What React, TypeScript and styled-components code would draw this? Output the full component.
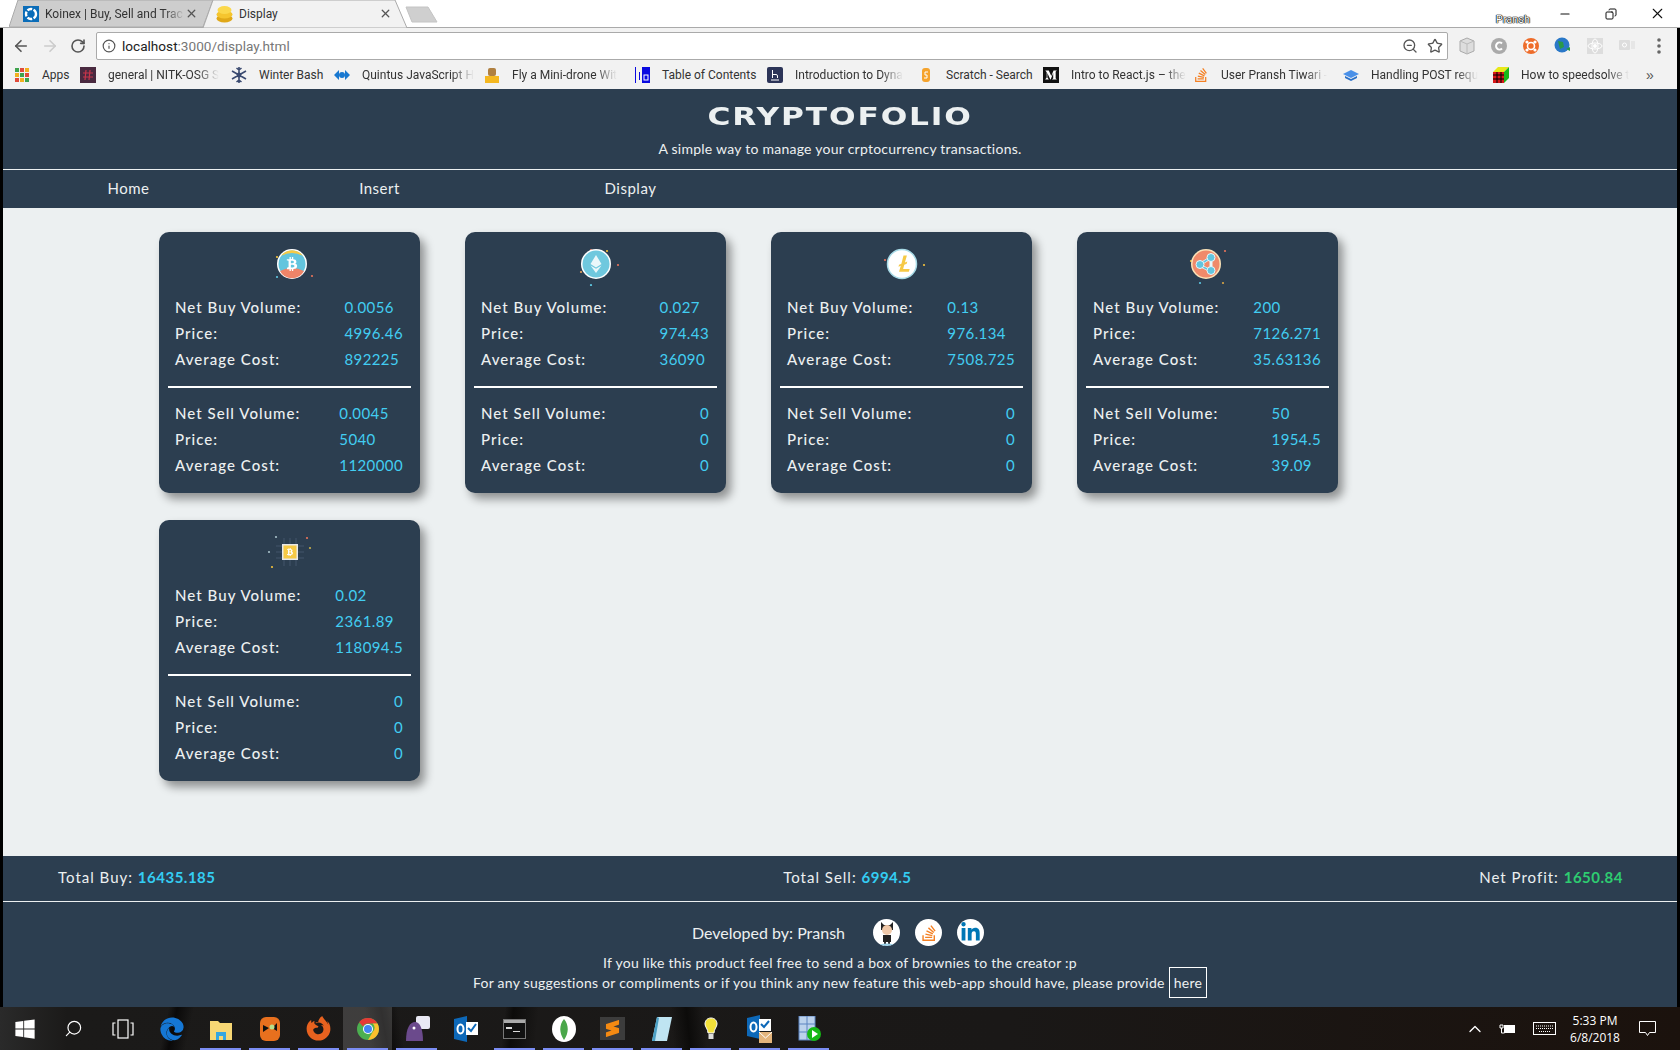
import styled, { createGlobalStyle } from 'styled-components';
import { ReactNode } from 'react';
import { ArrowLeft, ArrowRight, RotateCw, Info, ZoomOut, Star, Search, ChevronUp, X, Minus, Copy } from 'lucide-react';
import { FaBtc, FaStackOverflow, FaLinkedinIn, FaWindows, FaEdge, FaFirefoxBrowser, FaMediumM } from 'react-icons/fa';
import { SiSublimetext } from 'react-icons/si';

const GlobalStyle = createGlobalStyle`
  html, body {
    margin: 0;
    padding: 0;
    height: 100%;
    overflow: hidden;
    background: #000;
  }
  * {
    box-sizing: border-box;
  }
`;

const Screen = styled.div`
  width: 1680px;
  height: 1050px;
  display: flex;
  flex-direction: column;
  font-family: 'Liberation Sans', Arial, sans-serif;
`;

/* ---------- browser chrome ---------- */

const TabStrip = styled.div`
  height: 28px;
  flex: 0 0 auto;
  display: flex;
  padding-left: 9px;
  background: #fff;
  border-bottom: 1px solid #aaa;
`;

const Tab = styled.div<{ $active?: boolean }>`
  position: relative;
  width: 204px;
  height: 27px;
  display: flex;
  align-items: center;
  padding: 0 15px 0 ${p => (p.$active ? '13px' : '14px')};
  margin-left: ${p => (p.$active ? '-10px' : '0')};
  font-family: Roboto, sans-serif;
  font-size: 12px;
  color: #333;
  z-index: ${p => (p.$active ? 2 : 1)};
`;

const TabShape = styled.svg`
  position: absolute;
  left: 0;
  top: 0;
  z-index: -1;
`;

const TabLabel = styled.span<{ $fade?: boolean }>`
  flex: 1;
  margin-left: 6px;
  white-space: nowrap;
  ${p => p.$fade && 'mask-image: linear-gradient(to right, #000 85%, transparent);'}
`;

const NewTab = styled.svg`
  margin: 6px 0 0 -2px;
`;

const WindowControls = styled.div`
  margin-left: auto;
  display: flex;
  align-items: flex-start;
  color: #111;
`;

const UserBadge = styled.span`
  font-family: Roboto, sans-serif;
  font-size: 11px;
  line-height: 14px;
  margin: 13px 12px 0 0;
  color: #fff;
  text-shadow: 0 0 1px #000, 0 0 1px #000, 0 0 1px #000, 0 0 1px #000;
`;

const WindowButton = styled.span`
  width: 46px;
  height: 27px;
  display: flex;
  align-items: center;
  justify-content: center;
`;

const Toolbar = styled.div`
  height: 32px;
  flex: 0 0 auto;
  display: flex;
  align-items: flex-start;
  background: #f2f2f2;
  border-left: 3px solid #000;
  border-right: 3px solid #000;
  padding-top: 4px;
`;

const NavButtons = styled.div`
  width: 93px;
  height: 28px;
  display: flex;
  align-items: center;
  padding-left: 9px;
  gap: 11px;
`;

const AddressBar = styled.div`
  width: 1352px;
  height: 28px;
  display: flex;
  align-items: center;
  padding: 0 4px 0 5px;
  background: #fff;
  border: 1px solid #aaa;
  border-radius: 2px;
  font-family: Roboto, sans-serif;
  font-size: 13.6px;
  color: #777;
`;

const Host = styled.span`
  color: #222;
  margin-left: 6px;
`;

const AddressTools = styled.div`
  margin-left: auto;
  display: flex;
  align-items: center;
  gap: 9px;
  color: #555;
`;

const Extensions = styled.div`
  display: flex;
  align-items: center;
  height: 28px;
  margin-left: 10px;
  gap: 14px;
`;

const Bookmarks = styled.div`
  height: 29px;
  flex: 0 0 auto;
  display: flex;
  align-items: center;
  background: #f2f2f2;
  border-left: 3px solid #000;
  border-right: 3px solid #000;
  padding-left: 11px;
`;

const Bookmark = styled.div<{ $width: number }>`
  width: ${p => p.$width}px;
  flex: 0 0 auto;
  display: flex;
  align-items: center;
  gap: 12px;
  font-family: Roboto, sans-serif;
  font-size: 12px;
  color: #333;
  white-space: nowrap;
`;

const BookmarkLabel = styled.span<{ $fade?: boolean }>`
  ${p => p.$fade && 'mask-image: linear-gradient(to right, #000 80%, transparent);'}
`;

const More = styled.span`
  font-size: 14px;
  color: #555;
  margin-left: 5px;
`;

/* ---------- page ---------- */

const Page = styled.div`
  flex: 1;
  min-height: 0;
  display: flex;
  flex-direction: column;
  border-left: 3px solid #000;
  border-right: 3px solid #000;
  background: #ecf0f1;
  font-family: Lato, sans-serif;
`;

const Header = styled.header`
  height: 81px;
  flex: 0 0 auto;
  display: flex;
  flex-direction: column;
  align-items: center;
  background: #2c3e50;
  border-bottom: 1px solid #ecf0f1;
  color: #ecf0f1;
`;

const Title = styled.h1`
  margin: 13px 0 0;
  font-family: 'DejaVu Sans', sans-serif;
  font-size: 25px;
  line-height: 30px;
  font-weight: 700;
  letter-spacing: 1.5px;
  transform: scaleX(1.25);
`;

const Tagline = styled.p`
  margin: 8px 0 0;
  font-size: 14px;
  line-height: 17px;
  letter-spacing: 0.25px;
`;

const Nav = styled.nav`
  height: 38px;
  flex: 0 0 auto;
  display: flex;
  background: #2c3e50;
`;

const NavLink = styled.a`
  width: 251px;
  text-align: center;
  font-size: 15px;
  line-height: 36px;
  letter-spacing: 0.5px;
  color: #ecf0f1;
`;

const Main = styled.main`
  flex: 1;
  min-height: 0;
  display: flex;
  flex-wrap: wrap;
  align-content: flex-start;
  gap: 27px 45px;
  padding: 24px 250px 0 156px;
`;

const Card = styled.section`
  width: 261px;
  height: 261px;
  padding: 10px 9px 0;
  background: #2c3e50;
  border-radius: 10px;
  box-shadow: 5px 6px 10px rgba(0, 0, 0, 0.4);
`;

const CoinSlot = styled.div`
  height: 44px;
  margin-bottom: 8px;
  display: flex;
  justify-content: center;
`;

const Figures = styled.table`
  width: 100%;
  border-collapse: collapse;
  font-size: 15px;
`;

const Label = styled.td`
  height: 26px;
  padding: 0 7px;
  color: #ecf0f1;
  font-weight: 500;
  letter-spacing: 1.05px;
  white-space: nowrap;
`;

const Value = styled.td`
  width: 1%;
  height: 26px;
  padding: 0 8px 0 0;
  color: #42cdf2;
  letter-spacing: 0.4px;
  white-space: nowrap;
`;

const Divider = styled.hr`
  margin: 14px 0 12px;
  height: 2px;
  border: none;
  background: #fff;
`;

const Totals = styled.div`
  height: 46px;
  flex: 0 0 auto;
  display: flex;
  align-items: center;
  justify-content: space-between;
  padding: 0 54px 3px 55px;
  background: #2c3e50;
  border-bottom: 1px solid #ecf0f1;
  color: #ecf0f1;
  font-size: 15px;
  letter-spacing: 1px;
`;

const Amount = styled.strong<{ $profit?: boolean }>`
  letter-spacing: 0.5px;
  color: ${p => (p.$profit ? '#2ecc71' : '#34cdf3')};
`;

const Footer = styled.footer`
  flex: 0 0 105px;
  display: flex;
  flex-direction: column;
  align-items: center;
  padding-top: 17px;
  background: #2c3e50;
  color: #ecf0f1;
  font-size: 14px;
  line-height: 20px;
`;

const Credits = styled.div`
  height: 27px;
  display: flex;
  align-items: center;
  margin-bottom: 7px;
  padding-right: 4px;
  font-size: 16px;
`;

const Socials = styled.div`
  display: flex;
  gap: 15px;
  margin-left: 28px;
`;

const Social = styled.span<{ $color?: string }>`
  width: 27px;
  height: 27px;
  display: flex;
  align-items: center;
  justify-content: center;
  border-radius: 50%;
  background: #fff;
  color: ${p => p.$color || '#000'};
  font-size: 18px;
  overflow: hidden;
`;

const FooterLine = styled.div`
  letter-spacing: 0.25px;
`;

const HereLink = styled.a`
  margin-left: 4px;
  padding: 6px 4px;
  border: 1px solid #fff;
`;

/* ---------- taskbar ---------- */

const Taskbar = styled.div`
  height: 43px;
  flex: 0 0 auto;
  display: flex;
  align-items: stretch;
  color: #fff;
  font-family: 'Open Sans', sans-serif;
  background:
    linear-gradient(102deg, transparent 10%, #0a0909 10.5%, transparent 11.5%),
    linear-gradient(80deg, transparent 22%, #0a0909 23%, transparent 24%),
    linear-gradient(96deg, transparent 30%, #0c0b0a 30.5%, transparent 32%),
    linear-gradient(84deg, transparent 40%, #0c0b0a 41%, transparent 42%),
    linear-gradient(90deg, #2a2a2a 0, #1b1a19 4%, #1a1817 60%, #1b120d 100%);
`;

const TaskSlot = styled.div<{ $running?: boolean; $focus?: boolean }>`
  position: relative;
  width: 49px;
  display: flex;
  align-items: center;
  justify-content: center;
  font-size: 22px;
  background: ${p => (p.$focus ? 'rgba(255, 255, 255, 0.16)' : 'transparent')};
  ${p =>
    p.$running &&
    `&::after {
      content: '';
      position: absolute;
      left: 4px;
      right: 4px;
      bottom: 0;
      height: 2px;
      background: #7b8df3;
    }`}
`;

const Tray = styled.div`
  margin-left: auto;
  display: flex;
  align-items: center;
  padding-right: 15px;
`;

const TrayIcon = styled.span<{ $width: number }>`
  width: ${p => p.$width}px;
  display: flex;
  justify-content: center;
`;

const Clock = styled.div`
  width: 62px;
  margin: 0 3px;
  text-align: center;
  font-size: 12px;
  line-height: 17px;
`;

/* ---------- drawings ---------- */

const Spark = ({ dots }: { dots: [number, number, string][] }) => (
  <>
    {dots.map(([x, y, fill], i) => (
      <circle key={i} cx={x} cy={y} r={1.1} fill={fill} />
    ))}
  </>
);

const BitcoinCoin = () => (
  <svg width="60" height="44" viewBox="0 0 60 44">
    <Spark dots={[[17, 15, '#f5c33b'], [17, 35, '#5ec6e0'], [52, 34, '#e8745a']]} />
    <circle cx="32" cy="22" r="15" fill="#fff" />
    <circle cx="32" cy="22" r="13.5" fill="#63c5de" />
    <path d="M21 14a13.5 13.5 0 0 1 22 0q-11-6-22 0z" fill="#f6c945" />
    <path d="M20 29a13.5 13.5 0 0 0 24 0q-12-6-24 0z" fill="#ee8468" />
    <FaBtc x="25" y="15" size={14} color="#fff" />
  </svg>
);

const EtherCoin = () => (
  <svg width="60" height="44" viewBox="0 0 60 44">
    <Spark dots={[[41, 9, '#f5c33b'], [52, 23, '#e8745a'], [15, 30, '#e8a05a'], [25, 43, '#5ec6e0'], [25, 8, '#e8745a']]} />
    <circle cx="30" cy="22" r="15" fill="#fff" />
    <circle cx="30" cy="22" r="13.5" fill="#6fc8de" />
    <path d="M30 13l-5.5 9L30 25.5l5.5-3.500zM24.500 23.500L30 31l5.500-7.500-5.500 3.200z" fill="#eaf7fa" />
  </svg>
);

const LiteCoin = () => (
  <svg width="60" height="44" viewBox="0 0 60 44">
    <Spark dots={[[13, 18, '#e8745a'], [16, 24, '#5ec6e0'], [52, 23, '#f5c33b']]} />
    <circle cx="30" cy="22" r="14.5" fill="#fff" stroke="#a8dbe8" strokeWidth="1.5" />
    <path d="M31.5 13.5h3.4l-2 7 2.4-1-.6 2.2-2.4 1-1.2 4.3h6.6l-.9 2.8H27l1.8-6-2.3.9.5-2 2.4-1z" fill="#f6c945" />
  </svg>
);

const RippleCoin = () => (
  <svg width="60" height="44" viewBox="0 0 60 44">
    <Spark dots={[[13, 19, '#f5c33b'], [47, 9, '#e8745a'], [22, 41, '#5ec6e0'], [45, 41, '#d9a545']]} />
    <circle cx="28" cy="22" r="15" fill="#fbe3b8" />
    <circle cx="28" cy="22" r="13.5" fill="#f08a6a" />
    <path d="M21 23l12-7.500M21 23l12 6M33 15.500v13" stroke="#eaf7fa" strokeWidth="3" />
    <path d="M21 23l12-7.500M21 23l12 6" stroke="#63c5de" strokeWidth="1.500" />
    <circle cx="22" cy="22.500" r="4" fill="#63c5de" stroke="#eaf7fa" />
    <circle cx="33" cy="15.500" r="4" fill="#63c5de" stroke="#eaf7fa" />
    <circle cx="33" cy="28.500" r="4" fill="#63c5de" stroke="#eaf7fa" />
  </svg>
);

const CashCoin = () => (
  <svg width="60" height="44" viewBox="0 0 60 44">
    <Spark dots={[[12, 37, '#f5c33b'], [9, 22, '#a8c0c8'], [47, 8, '#e8745a'], [50, 18, '#c9b04a'], [16, 7, '#a8c0c8']]} />
    <path
      d="M24 8v6M30 8v6M36 8v6M24 30v6M30 30v6M36 30v6M16 16h6M16 22h6M16 28h6M38 16h6M38 22h6M38 28h6"
      stroke="#42556a"
    />
    <rect x="22" y="14" width="16" height="16" fill="#e8e8e8" />
    <rect x="23.500" y="15.500" width="13" height="13" fill="#f6c945" />
    <FaBtc x="26" y="18" size={8} color="#fff" />
  </svg>
);

const KoinexIcon = () => (
  <svg width="16" height="16" viewBox="0 0 16 16">
    <rect width="16" height="16" fill="#0a6cb8" />
    <circle cx="8" cy="8" r="5" fill="none" stroke="#fff" strokeWidth="2.4" strokeDasharray="5 1.4" />
  </svg>
);

const CoinsIcon = () => (
  <svg width="17" height="18" viewBox="0 0 17 18">
    <ellipse cx="8.5" cy="13.5" rx="8" ry="4" fill="#e0a818" />
    <ellipse cx="8.5" cy="9.5" rx="8" ry="4" fill="#f5c52e" />
    <ellipse cx="8.5" cy="5" rx="7" ry="4" fill="#fbd84c" />
  </svg>
);

const ExtIcon = ({ children }: { children: ReactNode }) => (
  <svg width="18" height="18" viewBox="0 0 18 18">
    {children}
  </svg>
);

const FavBox = styled.svg`
  flex: 0 0 auto;
`;

const Fav = ({ children }: { children: ReactNode }) => (
  <FavBox width="16" height="16" viewBox="0 0 16 16">
    {children}
  </FavBox>
);

const ChromeIcon = () => (
  <svg width="24" height="24" viewBox="0 0 24 24">
    <circle cx="12" cy="12" r="11" fill="#4caf50" />
    <path d="M12 1a11 11 0 0 1 9.5 5.5H12a5.5 5.5 0 0 0-5 3L3.2 5.2A11 11 0 0 1 12 1z" fill="#e53935" />
    <path d="M21.5 6.5A11 11 0 0 1 12 23l4.8-8.2a5.5 5.5 0 0 0-.2-8.3z" fill="#fbc02d" />
    <circle cx="12" cy="12" r="5" fill="#fff" />
    <circle cx="12" cy="12" r="4" fill="#4285f4" />
  </svg>
);

const SublimeTile = styled.span`
  display: flex;
  padding: 3px 4px;
  background: #3c3c3c;
`;

const taskIcons: { icon: ReactNode; running?: boolean; focus?: boolean }[] = [
  { icon: <FaWindows color="#fff" /> },
  { icon: <Search size={19} color="#fff" strokeWidth={1.5} transform="scale(-1 1)" /> },
  {
    icon: (
      <svg width="22" height="20" viewBox="0 0 22 20" fill="none" stroke="#fff" strokeWidth="1.2">
        <rect x="6" y="1" width="10" height="18" />
        <path d="M3.5 4H1v12h2.5M18.5 4H21v12h-2.5" />
      </svg>
    ),
  },
  { icon: <FaEdge color="#1577d4" size={24} /> },
  {
    icon: (
      <svg width="24" height="24" viewBox="0 0 24 24">
        <path d="M1 4h8l2 2h12v17H1z" fill="#f7d774" />
        <path d="M7 23v-8h10v8h-3v-4h-4v4z" fill="#35a6e0" />
      </svg>
    ),
    running: true,
  },
  {
    icon: (
      <svg width="22" height="26" viewBox="0 0 22 26">
        <rect x="1" y="1" width="20" height="24" rx="6" fill="#e8701e" />
        <path d="M4 9l6 3-6 4zM18 7l-5 5 5 3z" fill="#111" />
        <circle cx="13" cy="11" r="2.5" fill="#b9e08a" />
      </svg>
    ),
    running: true,
  },
  { icon: <FaFirefoxBrowser color="#e8621f" size={25} />, running: true },
  { icon: <ChromeIcon />, running: true, focus: true },
  {
    icon: (
      <svg width="26" height="26" viewBox="0 0 26 26">
        <rect x="12" y="0" width="14" height="13" rx="2" fill="#e9e9f4" />
        <path d="M2 25C2 12 6 6 11 6s8 7 8 19z" fill="#6b4a8c" />
        <circle cx="10" cy="12" r="1.5" fill="#fff" />
      </svg>
    ),
    running: true,
  },
  {
    icon: (
      <svg width="24" height="26" viewBox="0 0 24 26">
        <path d="M0 3l13-3v26L0 23z" fill="#0d68b8" />
        <rect x="12" y="6" width="12" height="13" fill="#fff" />
        <path d="M14 12l3 3 5-7" fill="none" stroke="#0d68b8" strokeWidth="2" />
        <ellipse cx="6.5" cy="13" rx="3" ry="4.5" fill="none" stroke="#fff" strokeWidth="2" />
      </svg>
    ),
  },
  {
    icon: (
      <svg width="23" height="20" viewBox="0 0 23 20">
        <rect x=".5" y=".5" width="22" height="19" fill="#111" stroke="#777" />
        <rect x="1" y="1" width="21" height="3" fill="#aaa" />
        <path d="M3 8h6v2H3zM10 12h7v1h-7z" fill="#ddd" />
      </svg>
    ),
    running: true,
  },
  {
    icon: (
      <svg width="24" height="26" viewBox="0 0 24 26">
        <ellipse cx="12" cy="13" rx="12" ry="13" fill="#fff" />
        <path d="M12 3c-5 6-5 14 0 21 5-7 5-15 0-21z" fill="#4aa74a" />
      </svg>
    ),
    running: true,
  },
  {
    icon: (
      <SublimeTile>
        <SiSublimetext color="#f58a12" size={17} />
      </SublimeTile>
    ),
    running: true,
  },
  {
    icon: (
      <svg width="22" height="26" viewBox="0 0 22 26">
        <path d="M6 1h15l-5 24H1z" fill="#bfe4f2" />
        <path d="M1 25l5-24 2 1-4 23z" fill="#4a9fc4" />
      </svg>
    ),
    running: true,
  },
  {
    icon: (
      <svg width="14" height="24" viewBox="0 0 14 24">
        <path d="M7 1c4 0 6 3 6 6 0 3-3 5-3 9H4c0-4-3-6-3-9 0-3 2-6 6-6z" fill="#f4e23a" stroke="#fff" />
        <rect x="4.5" y="17" width="5" height="5" fill="#ddd" />
      </svg>
    ),
    running: true,
  },
  {
    icon: (
      <svg width="25" height="28" viewBox="0 0 25 28">
        <path d="M0 3l13-3v24L0 21z" fill="#0d68b8" />
        <rect x="12" y="4" width="12" height="12" fill="#fff" />
        <path d="M14 9l3 3 5-6" fill="none" stroke="#0d68b8" strokeWidth="2" />
        <rect x="12" y="17" width="13" height="11" fill="#e3b47c" />
        <path d="M12 17l6.5 6 6.5-6" fill="none" stroke="#fff" />
        <ellipse cx="6.5" cy="12" rx="3" ry="4.5" fill="none" stroke="#fff" strokeWidth="2" />
      </svg>
    ),
    running: true,
  },
  {
    icon: (
      <svg width="24" height="26" viewBox="0 0 24 26">
        <rect x="2" y="0" width="16" height="24" fill="#bcd2ec" stroke="#5c84c0" />
        <path d="M2 8h16M2 16h16M10 0v24" stroke="#5c84c0" />
        <circle cx="17" cy="18" r="7" fill="#15b815" />
        <path d="M15 14l6 4-6 4z" fill="#fff" />
      </svg>
    ),
    running: true,
  },
];

const bookmarks: { icon: ReactNode; label: string; width: number; fade?: boolean }[] = [
  {
    icon: (
      <Fav>
        {[1, 6, 11].map(x =>
          [1, 6, 11].map((y, i) => (
            <rect key={`${x}-${y}`} x={x} y={y} width="4" height="4" fill={['#e04b3a', '#3fa34d', '#f2b01e'][(x + i) % 3]} />
          ))
        )}
      </Fav>
    ),
    label: 'Apps',
    width: 66,
  },
  {
    icon: (
      <Fav>
        <rect width="16" height="16" fill="#4a2a40" />
        <path d="M6 3l-1 10M10 3L9 13M3 6h10M3 10h10" stroke="#c8354a" strokeWidth="1.2" />
      </Fav>
    ),
    label: 'general | NITK-OSG S',
    width: 151,
    fade: true,
  },
  {
    icon: (
      <Fav>
        <path d="M8 0v16M1 4l14 8M15 4L1 12M8 3L5.5 1M8 3l2.500-2M8 13l-2.500 2M8 13l2.500 2" stroke="#3a4a70" strokeWidth="1.600" fill="none" />
        <circle cx="8" cy="8" r="2.500" fill="#3a4a70" />
      </Fav>
    ),
    label: 'Winter Bash',
    width: 103,
  },
  {
    icon: (
      <Fav>
        <path d="M5 3L0 8l5 5zM11 3l5 5-5 5z" fill="#1878d0" />
        <circle cx="8" cy="8" r="3" fill="#1878d0" />
      </Fav>
    ),
    label: 'Quintus JavaScript H',
    width: 150,
    fade: true,
  },
  {
    icon: (
      <Fav>
        <rect x="1" y="9" width="14" height="7" fill="#f5b820" />
        <rect x="4" y="1" width="8" height="8" rx="2" fill="#b08040" />
      </Fav>
    ),
    label: 'Fly a Mini-drone Wit',
    width: 150,
    fade: true,
  },
  {
    icon: (
      <Fav>
        <rect x="8" width="8" height="16" fill="#0a0ae0" />
        <rect x="1" width="1" height="16" fill="#0a0ae0" />
        <rect x="5" y="5" width="1" height="8" fill="#0a0ae0" />
        <rect x="10" y="8" width="4" height="5" fill="none" stroke="#fff" />
      </Fav>
    ),
    label: 'Table of Contents',
    width: 133,
  },
  {
    icon: (
      <Fav>
        <rect width="16" height="16" rx="2" fill="#2c3458" />
        <path d="M5.5 3v8M5.5 7.5H9A1.5 1.5 0 0 1 10.5 9v2M4 13h8" stroke="#fff" fill="none" />
      </Fav>
    ),
    label: 'Introduction to Dyna',
    width: 151,
    fade: true,
  },
  {
    icon: (
      <Fav>
        <rect x="4" y="1" width="8" height="14" rx="3" fill="#f5a32c" />
        <path d="M10 5H7v3h2v3H6" stroke="#fff" fill="none" />
      </Fav>
    ),
    label: 'Scratch - Search',
    width: 125,
  },
  {
    icon: (
      <Fav>
        <rect width="16" height="16" fill="#111" />
        <FaMediumM x="2" y="2" size={12} color="#fff" />
      </Fav>
    ),
    label: 'Intro to React.js – the',
    width: 150,
    fade: true,
  },
  {
    icon: (
      <Fav>
        <FaStackOverflow size={16} color="#f48024" />
      </Fav>
    ),
    label: 'User Pransh Tiwari -',
    width: 150,
    fade: true,
  },
  {
    icon: (
      <Fav>
        <path d="M0 7l8-4 8 4-8 4z" fill="#4a90e8" />
        <path d="M2 9l6 3 6-3v2l-6 3-6-3z" fill="#2a70c8" />
      </Fav>
    ),
    label: 'Handling POST requ',
    width: 150,
    fade: true,
  },
  {
    icon: (
      <Fav>
        <path d="M0 5h11v11H0z" fill="#d81818" />
        <path d="M0 5l5-5h11L11 5z" fill="#e8e818" />
        <path d="M11 5l5-5v11l-5 5z" fill="#18b818" />
        <path d="M0 8h11M0 12h11M4 5v11M8 5v11" stroke="#000" />
      </Fav>
    ),
    label: 'How to speedsolve t',
    width: 148,
    fade: true,
  },
];

type Row = [string, string];

const coins: { coin: ReactNode; buy: string[]; sell: string[] }[] = [
  { coin: <BitcoinCoin />, buy: ['0.0056', '4996.46', '892225'], sell: ['0.0045', '5040', '1120000'] },
  { coin: <EtherCoin />, buy: ['0.027', '974.43', '36090'], sell: ['0', '0', '0'] },
  { coin: <LiteCoin />, buy: ['0.13', '976.134', '7508.725'], sell: ['0', '0', '0'] },
  { coin: <RippleCoin />, buy: ['200', '7126.271', '35.63136'], sell: ['50', '1954.5', '39.09'] },
  { coin: <CashCoin />, buy: ['0.02', '2361.89', '118094.5'], sell: ['0', '0', '0'] },
];

const FigureTable = ({ title, values }: { title: string; values: string[] }) => {
  const rows: Row[] = [
    [title, values[0]],
    ['Price:', values[1]],
    ['Average Cost:', values[2]],
  ];
  return (
    <Figures>
      <tbody>
        {rows.map(([label, value]) => (
          <tr key={label}>
            <Label>{label}</Label>
            <Value>{value}</Value>
          </tr>
        ))}
      </tbody>
    </Figures>
  );
};

const App = () => (
  <Screen>
    <GlobalStyle />
    <TabStrip>
      <Tab>
        <TabShape width="204" height="27" viewBox="0 0 204 27">
          <path d="M0 27L9 0h195l-10 27z" fill="#cdcdcd" stroke="#aaa" />
        </TabShape>
        <KoinexIcon />
        <TabLabel $fade>Koinex | Buy, Sell and Trac</TabLabel>
        <X size={13} color="#555" strokeWidth={2.4} />
      </Tab>
      <Tab $active>
        <TabShape width="204" height="28" viewBox="0 0 204 28">
          <path d="M0 28L10 0h182l12 28z" fill="#f2f2f2" stroke="#aaa" />
        </TabShape>
        <CoinsIcon />
        <TabLabel>Display</TabLabel>
        <X size={13} color="#555" strokeWidth={2.4} />
      </Tab>
      <NewTab width="34" height="18" viewBox="0 0 34 18">
        <path d="M1 1h22l9 15H7z" fill="#cfcfcf" stroke="#c4c4c4" />
      </NewTab>
      <WindowControls>
        <UserBadge>Pransh</UserBadge>
        <WindowButton>
          <Minus size={14} strokeWidth={1.8} />
        </WindowButton>
        <WindowButton>
          <Copy size={12} strokeWidth={2} transform="scale(-1 1)" />
        </WindowButton>
        <WindowButton>
          <X size={17} strokeWidth={1.5} />
        </WindowButton>
      </WindowControls>
    </TabStrip>
    <Toolbar>
      <NavButtons>
        <ArrowLeft size={18} color="#555" strokeWidth={2.2} />
        <ArrowRight size={18} color="#ccc" strokeWidth={2.2} />
        <RotateCw size={16} color="#555" strokeWidth={2.4} />
      </NavButtons>
      <AddressBar>
        <Info size={14} color="#555" />
        <Host>localhost</Host>:3000/display.html
        <AddressTools>
          <ZoomOut size={16} />
          <Star size={16} />
        </AddressTools>
      </AddressBar>
      <Extensions>
        <ExtIcon>
          <path d="M9 1l7 3v10l-7 3-7-3V4z" fill="#ddd" stroke="#aaa" />
          <path d="M9 7v10M2 4l7 3 7-3" stroke="#bbb" fill="none" />
        </ExtIcon>
        <ExtIcon>
          <circle cx="9" cy="9" r="8" fill="#aaa" />
          <path d="M12 6.5a3.5 3.5 0 1 0 0 5" stroke="#fff" strokeWidth="2" fill="none" />
        </ExtIcon>
        <ExtIcon>
          <circle cx="9" cy="9" r="8" fill="#ee6c2a" />
          <circle cx="9" cy="9" r="3.5" fill="none" stroke="#fff" strokeWidth="1.6" />
          <circle cx="5" cy="5" r="1.6" fill="#fff" />
          <circle cx="13" cy="5" r="1.6" fill="#fff" />
          <circle cx="5" cy="13" r="1.6" fill="#fff" />
          <circle cx="13" cy="13" r="1.6" fill="#fff" />
        </ExtIcon>
        <ExtIcon>
          <circle cx="8" cy="8" r="7.5" fill="#2a78c8" />
          <path d="M4 4l5 1 1 5-4 2zM12 12l4-2v4z" fill="#2a9a48" />
        </ExtIcon>
        <ExtIcon>
          <rect x="1" y="1" width="16" height="16" fill="#ddd" />
          <circle cx="9" cy="9" r="2" fill="#fff" />
          <ellipse cx="9" cy="9" rx="7" ry="3" fill="none" stroke="#fff" />
          <ellipse cx="9" cy="9" rx="3" ry="7" fill="none" stroke="#fff" />
        </ExtIcon>
        <ExtIcon>
          <rect x="1" y="3" width="11" height="10" rx="1" fill="#ddd" />
          <path d="M13 4h4v8h-4z" fill="#e6e6e6" />
          <circle cx="6.5" cy="8" r="2" fill="none" stroke="#fff" />
        </ExtIcon>
        <ExtIcon>
          <circle cx="9" cy="3" r="1.8" fill="#666" />
          <circle cx="9" cy="9" r="1.8" fill="#666" />
          <circle cx="9" cy="15" r="1.8" fill="#666" />
        </ExtIcon>
      </Extensions>
    </Toolbar>
    <Bookmarks>
      {bookmarks.map(b => (
        <Bookmark key={b.label} $width={b.width}>
          {b.icon}
          <BookmarkLabel $fade={b.fade}>{b.label}</BookmarkLabel>
        </Bookmark>
      ))}
      <More>»</More>
    </Bookmarks>
    <Page>
      <Header>
        <Title>CRYPTOFOLIO</Title>
        <Tagline>A simple way to manage your crptocurrency transactions.</Tagline>
      </Header>
      <Nav>
        <NavLink>Home</NavLink>
        <NavLink>Insert</NavLink>
        <NavLink>Display</NavLink>
      </Nav>
      <Main>
        {coins.map((c, i) => (
          <Card key={i}>
            <CoinSlot>{c.coin}</CoinSlot>
            <FigureTable title="Net Buy Volume:" values={c.buy} />
            <Divider />
            <FigureTable title="Net Sell Volume:" values={c.sell} />
          </Card>
        ))}
      </Main>
      <Totals>
        <span>
          Total Buy: <Amount>16435.185</Amount>
        </span>
        <span>
          Total Sell: <Amount>6994.5</Amount>
        </span>
        <span>
          Net Profit: <Amount $profit>1650.84</Amount>
        </span>
      </Totals>
      <Footer>
        <Credits>
          Developed by: Pransh
          <Socials>
            <Social>
              <svg width="22" height="26" viewBox="0 0 22 26">
                <path d="M5 2l3 3h6l3-3v8H5z" fill="#222" />
                <circle cx="11" cy="10" r="5" fill="#f0c8a8" />
                <path d="M7 15h8v7H7z" fill="#222" />
                <path d="M8 22h2v4H8zM12 22h2v4h-2z" fill="#333" />
                <ellipse cx="11" cy="25" rx="8" ry="1.5" fill="#9fd3ea" />
              </svg>
            </Social>
            <Social $color="#f48024">
              <FaStackOverflow />
            </Social>
            <Social $color="#0077b5">
              <FaLinkedinIn size={21} />
            </Social>
          </Socials>
        </Credits>
        <FooterLine>If you like this product feel free to send a box of brownies to the creator :p</FooterLine>
        <FooterLine>
          For any suggestions or compliments or if you think any new feature this web-app should have, please provide
          <HereLink>here</HereLink>
        </FooterLine>
      </Footer>
    </Page>
    <Taskbar>
      {taskIcons.map((t, i) => (
        <TaskSlot key={i} $running={t.running} $focus={t.focus}>
          {t.icon}
        </TaskSlot>
      ))}
      <Tray>
        <TrayIcon $width={24}>
          <ChevronUp size={20} strokeWidth={1.6} />
        </TrayIcon>
        <TrayIcon $width={40}>
          <svg width="17" height="12" viewBox="0 0 17 12" fill="none" stroke="#fff">
            <rect x="5.5" y="2.5" width="10" height="7" fill="#fff" />
            <path d="M1 2h3v3H1zM2.5 5v5h3" />
          </svg>
        </TrayIcon>
        <TrayIcon $width={34}>
          <svg width="23" height="13" viewBox="0 0 23 13" fill="none" stroke="#fff">
            <rect x=".5" y=".5" width="22" height="12" />
            <path d="M3 4h17M3 6.5h17M6 9.5h11" strokeDasharray="1 1" />
          </svg>
        </TrayIcon>
        <Clock>
          5:33 PM
          <br />
          6/8/2018
        </Clock>
        <TrayIcon $width={36}>
          <svg width="17" height="17" viewBox="0 0 17 17" fill="none" stroke="#fff">
            <path d="M.5 1.5h16v11h-6l-2 3-2-3h-6z" />
          </svg>
        </TrayIcon>
      </Tray>
    </Taskbar>
  </Screen>
);

export default App;
